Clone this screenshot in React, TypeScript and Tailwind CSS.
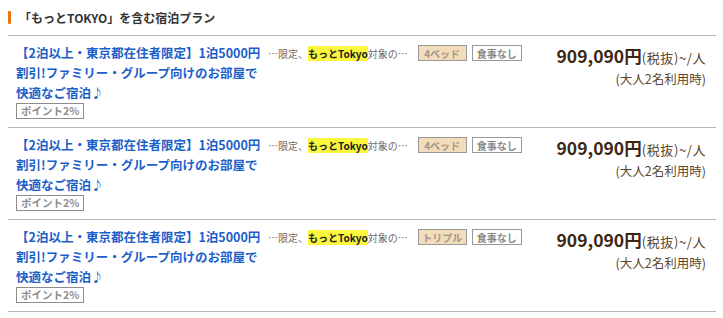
import React from "react";

const rows = [
  { room: "4ベッド" },
  { room: "4ベッド" },
  { room: "トリプル" },
];

function Row({ room }: { room: string }) {
  return (
    <div className="flex h-[92px] border-b border-[#bdb6ae] pl-[8px] pr-[10px] pt-[7px]">
      <div className="w-[245px] shrink-0">
        <div className="text-[12.5px] leading-[20px] font-bold text-[#1b5fc9]">
          【2泊以上・東京都在住者限定】1泊5000円割引!ファミリー・グループ向けのお部屋で快適なご宿泊♪
        </div>
        <div className="flex h-[16px] w-fit items-center border border-[#8d8d8d] px-[4px] text-[10.5px] font-bold text-[#8d8d8d]">
          ポイント2%
        </div>
      </div>
      <div className="ml-[7px] flex h-[20px] items-center">
        <span className="text-[10px] text-[#6b6b6b]">
          …限定、<span className="bg-[#fcf63c] font-bold text-[#222]">もっとTokyo</span>対象の…
        </span>
        <span className="ml-[10px] inline-flex h-[16px] w-[49px] items-center justify-center border border-[#999] bg-[#f2dcb9] text-[10px] font-bold text-[#a0968a]">
          {room}
        </span>
        <span className="ml-[5px] inline-flex h-[16px] w-[50px] items-center justify-center border border-[#999] bg-white text-[10px] font-bold text-[#888]">
          食事なし
        </span>
      </div>
      <div className="ml-auto flex flex-col items-end pt-[2px]">
        <div className="flex items-baseline">
          <span className="text-[17.5px] font-bold leading-[22px] text-[#3d2612]">909,090円</span>
          <span className="text-[13px] tracking-[0.6px] text-[#5a4530]">(税抜)~/人</span>
        </div>
        <div className="text-[12.5px] leading-[22px] text-[#5a4530]">(大人2名利用時)</div>
      </div>
    </div>
  );
}

export default function App() {
  return (
    <div
      className="w-[723px] h-[318px] bg-white pl-[8px] pr-[7px]"
      style={{ fontFamily: '"Noto Sans CJK JP", "Noto Sans", sans-serif' }}
    >
      <div className="flex h-[36px] items-center border-b border-[#bdb6ae]">
        <div className="h-[13px] w-[3px] rounded-[1px] bg-[#ea7410]" />
        <div className="ml-[8px] text-[12px] font-bold text-[#333]">「もっとTOKYO」を含む宿泊プラン</div>
      </div>
      {rows.map((r, i) => (
        <Row key={i} room={r.room} />
      ))}
    </div>
  );
}
